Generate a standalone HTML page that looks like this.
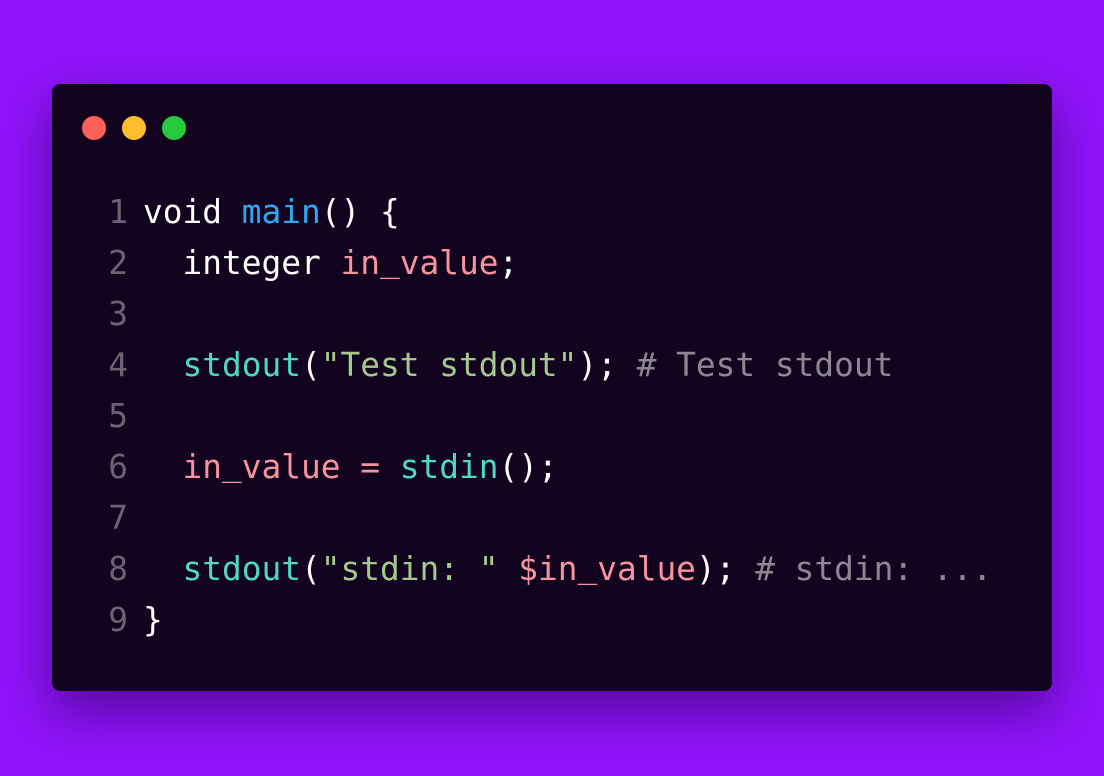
<!DOCTYPE html>
<html><head><style>
html,body{margin:0;padding:0}
body{width:1104px;height:776px;background:#8f14fa;position:relative;overflow:hidden;font-family:"DejaVu Sans Mono","Liberation Mono",monospace}
.card{position:absolute;left:52px;top:84px;width:1000px;height:607px;background:#12041f;border-radius:8px;box-shadow:0 20px 50px rgba(40,0,80,.55)}
.dot{position:absolute;top:32px;width:24px;height:24px;border-radius:50%}
.code{position:absolute;left:48px;top:103px;font-size:32.8px;line-height:51px;color:#fff;white-space:pre}
.ln{color:#6b6470;display:inline-block;width:28px;text-align:right;margin-right:15px}
.f{color:#2ea8f2}.v{color:#f7929e}.t{color:#4fd8c4}.s{color:#a4c98a}.c{color:#8c8790}
.u{display:inline-block;position:relative;top:-3px;line-height:1}
</style></head><body>
<div class="card">
<div class="dot" style="left:30px;background:#ff5f56"></div>
<div class="dot" style="left:70px;background:#ffbd2e"></div>
<div class="dot" style="left:110px;background:#27c93f"></div>
<div class="code"><span class="ln">1</span>void <span class="f">main</span>() {
<span class="ln">2</span>  integer <span class="v">in<span class="u">_</span>value</span>;
<span class="ln">3</span>
<span class="ln">4</span>  <span class="t">stdout</span>(<span class="s">"Test stdout"</span>); <span class="c"># Test stdout</span>
<span class="ln">5</span>
<span class="ln">6</span>  <span class="v">in<span class="u">_</span>value</span> <span class="v">=</span> <span class="t">stdin</span>();
<span class="ln">7</span>
<span class="ln">8</span>  <span class="t">stdout</span>(<span class="s">"stdin: "</span> <span class="v">$in<span class="u">_</span>value</span>); <span class="c"># stdin: ...</span>
<span class="ln">9</span>}</div>
</div>
</body></html>
